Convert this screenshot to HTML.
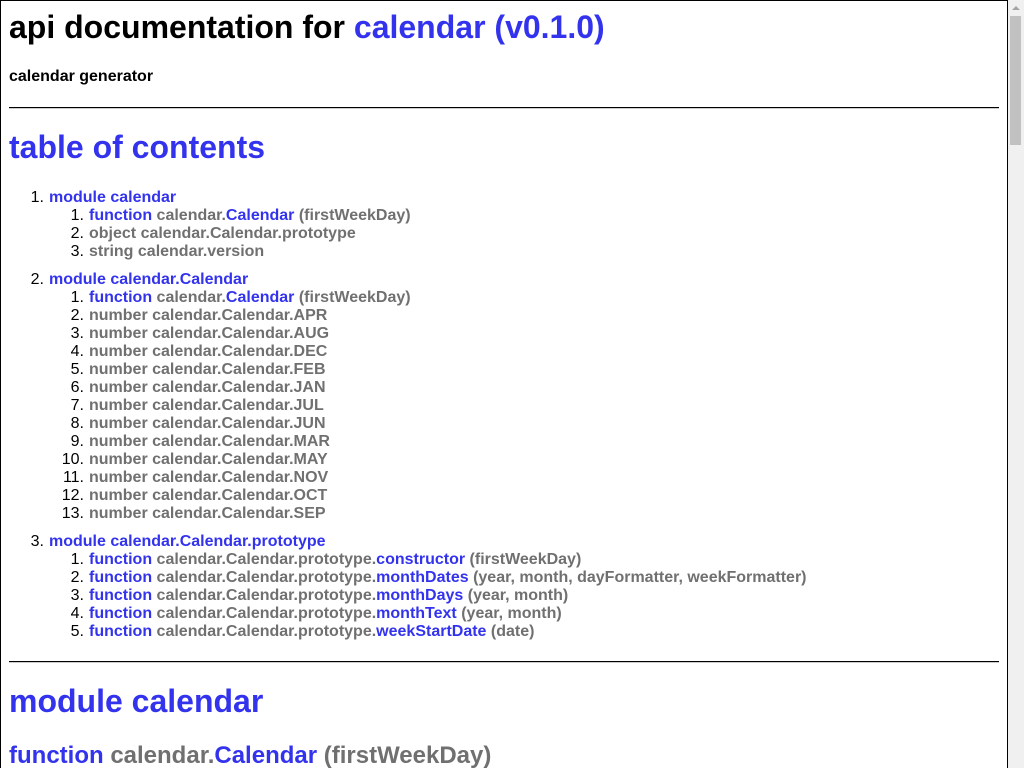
<!DOCTYPE html>
<html><head><meta charset="utf-8"><style>
html,body{margin:0;padding:0;width:1024px;height:768px;overflow:hidden;background:#fff;}
body{font-family:"Liberation Sans",Arial,sans-serif;font-weight:bold;color:#000;position:relative;}
.frame{position:absolute;left:0;top:0;width:1006px;height:768px;border:1px solid #000;border-bottom:none;}
.sb{position:absolute;left:1008px;top:0;width:16px;height:768px;background:#f0f0f0;}
.thumb{position:absolute;left:2px;top:16px;width:11px;height:129px;background:#c1c1c1;}
.arr{position:absolute;left:4px;top:6px;width:0;height:0;border-left:4px solid transparent;border-right:4px solid transparent;border-bottom:4px solid #a3a3a3;}
.a{position:absolute;white-space:nowrap;}
.b{color:#3333ee;}
.g{color:#707070;}
.h1{font-size:32px;line-height:37px;left:9px;}
.hr{position:absolute;left:9px;width:990px;height:0;border-top:1px solid #000;border-bottom:1px solid #ccc;}
.li{position:absolute;font-size:16px;line-height:18px;white-space:nowrap;}
.n{position:absolute;font-weight:normal;text-align:right;width:30px;font-size:16px;line-height:18px;}
.w{position:absolute;left:0;top:2px;width:1000px;height:500px;}
</style></head><body>
<div class="frame"></div>
<div class="a h1" style="top:9px">api documentation for <span class="b">calendar (v0.1.0)</span></div>
<div class="a" style="left:9px;top:68px;font-size:16px;line-height:18px">calendar generator</div>
<div class="hr" style="top:107px"></div>
<div class="a h1 b" style="top:129px">table of contents</div>

<div class="w">
<div class="n" style="left:14px;top:187px">1.</div><div class="li b" style="left:49px;top:187px">module calendar</div>
<div class="n" style="left:54px;top:205px">1.</div><div class="li" style="left:89px;top:205px"><span class="b">function</span> <span class="g">calendar.</span><span class="b">Calendar</span> <span class="g">(firstWeekDay)</span></div>
<div class="n" style="left:54px;top:223px">2.</div><div class="li g" style="left:89px;top:223px">object calendar.Calendar.prototype</div>
<div class="n" style="left:54px;top:241px">3.</div><div class="li g" style="left:89px;top:241px">string calendar.version</div>

<div class="n" style="left:14px;top:269px">2.</div><div class="li b" style="left:49px;top:269px">module calendar.Calendar</div>
<div class="n" style="left:54px;top:287px">1.</div><div class="li" style="left:89px;top:287px"><span class="b">function</span> <span class="g">calendar.</span><span class="b">Calendar</span> <span class="g">(firstWeekDay)</span></div>
<div class="n" style="left:54px;top:305px">2.</div><div class="li g" style="left:89px;top:305px">number calendar.Calendar.APR</div>
<div class="n" style="left:54px;top:323px">3.</div><div class="li g" style="left:89px;top:323px">number calendar.Calendar.AUG</div>
<div class="n" style="left:54px;top:341px">4.</div><div class="li g" style="left:89px;top:341px">number calendar.Calendar.DEC</div>
<div class="n" style="left:54px;top:359px">5.</div><div class="li g" style="left:89px;top:359px">number calendar.Calendar.FEB</div>
<div class="n" style="left:54px;top:377px">6.</div><div class="li g" style="left:89px;top:377px">number calendar.Calendar.JAN</div>
<div class="n" style="left:54px;top:395px">7.</div><div class="li g" style="left:89px;top:395px">number calendar.Calendar.JUL</div>
<div class="n" style="left:54px;top:413px">8.</div><div class="li g" style="left:89px;top:413px">number calendar.Calendar.JUN</div>
<div class="n" style="left:54px;top:431px">9.</div><div class="li g" style="left:89px;top:431px">number calendar.Calendar.MAR</div>
<div class="n" style="left:54px;top:449px">10.</div><div class="li g" style="left:89px;top:449px">number calendar.Calendar.MAY</div>
<div class="n" style="left:54px;top:467px">11.</div><div class="li g" style="left:89px;top:467px">number calendar.Calendar.NOV</div>
<div class="n" style="left:54px;top:485px">12.</div><div class="li g" style="left:89px;top:485px">number calendar.Calendar.OCT</div>
<div class="n" style="left:54px;top:503px">13.</div><div class="li g" style="left:89px;top:503px">number calendar.Calendar.SEP</div>

<div class="n" style="left:14px;top:531px">3.</div><div class="li b" style="left:49px;top:531px">module calendar.Calendar.prototype</div>
<div class="n" style="left:54px;top:549px">1.</div><div class="li" style="left:89px;top:549px"><span class="b">function</span> <span class="g">calendar.Calendar.prototype.</span><span class="b">constructor</span> <span class="g">(firstWeekDay)</span></div>
<div class="n" style="left:54px;top:567px">2.</div><div class="li" style="left:89px;top:567px"><span class="b">function</span> <span class="g">calendar.Calendar.prototype.</span><span class="b">monthDates</span> <span class="g">(year, month, dayFormatter, weekFormatter)</span></div>
<div class="n" style="left:54px;top:585px">3.</div><div class="li" style="left:89px;top:585px"><span class="b">function</span> <span class="g">calendar.Calendar.prototype.</span><span class="b">monthDays</span> <span class="g">(year, month)</span></div>
<div class="n" style="left:54px;top:603px">4.</div><div class="li" style="left:89px;top:603px"><span class="b">function</span> <span class="g">calendar.Calendar.prototype.</span><span class="b">monthText</span> <span class="g">(year, month)</span></div>
<div class="n" style="left:54px;top:621px">5.</div><div class="li" style="left:89px;top:621px"><span class="b">function</span> <span class="g">calendar.Calendar.prototype.</span><span class="b">weekStartDate</span> <span class="g">(date)</span></div>
</div>

<div class="hr" style="top:661px"></div>
<div class="a h1 b" style="top:683px">module calendar</div>
<div class="a" style="left:9px;top:742px;font-size:24px;line-height:28px"><span class="b">function</span> <span class="g">calendar.</span><span class="b">Calendar</span> <span class="g">(firstWeekDay)</span></div>

<div class="sb"><div class="arr"></div><div class="thumb"></div></div>
</body></html>
